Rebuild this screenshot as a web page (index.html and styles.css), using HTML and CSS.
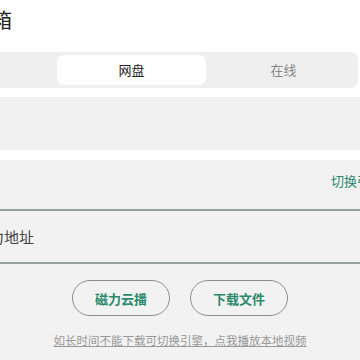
FILE: index.html
```html
<!DOCTYPE html>
<html lang="zh-CN">
<head>
  <meta charset="UTF-8">
  <meta name="viewport" content="width=device-width, initial-scale=1.0">
  <title>磁力工具箱</title>
  <link rel="stylesheet" href="styles.css">
</head>
<body>
  <div class="page">
    <h1 class="title">磁力工具箱</h1>
    <div class="tabs">
      <div class="tab">种子</div>
      <div class="tab active">网盘</div>
      <div class="tab">在线</div>
    </div>
    <div class="panel panel-top"></div>
    <div class="panel panel-main">
      <div class="engine-row">
        <span class="engine">切换引擎</span>
      </div>
      <div class="input-box">请输入磁力地址</div>
      <div class="actions">
        <button class="pill">磁力云播</button>
        <button class="pill">下载文件</button>
      </div>
      <div class="tip"><a href="#">如长时间不能下载可切换引擎，点我播放本地视频</a></div>
    </div>
  </div>
</body>
</html>
```

FILE: styles.css
```css
html, body {
  margin: 0;
  overflow: hidden;
  background: #fff;
}
body {
  font-family: "Noto Sans CJK SC", "Noto Sans", sans-serif;
  color: #222;
}
.page {
  width: 560px;
  margin-left: -100px;
}
.title {
  margin: 0;
  padding: 6px 12px;
  font-size: 20px;
  line-height: 28px;
  font-weight: normal;
  color: #222;
}
.tabs {
  display: flex;
  margin: 12px 102px 0 5px;
  padding: 3px;
  background: #efefef;
  border-radius: 8px;
}
.tab {
  flex: 1;
  height: 30px;
  line-height: 30px;
  text-align: center;
  font-size: 13px;
  color: #888;
  border-radius: 7px;
}
.tab:last-child {
  text-indent: 6px;
}
.tab.active {
  background: #fff;
  color: #222;
}
.panel {
  background: #f1f1f1;
}
.panel-top {
  margin-top: 9px;
  height: 53px;
}
.panel-main {
  margin-top: 10px;
  padding-bottom: 20px;
  background: #f2f2f2;
}
.engine-row {
  display: flex;
  justify-content: flex-end;
  padding-right: 77px;
  height: 42px;
  line-height: 42px;
}
.engine {
  font-size: 13px;
  color: #2b8a6b;
}
.input-box {
  box-sizing: border-box;
  margin: 7px 12px 0;
  height: 55px;
  padding-left: 15px;
  line-height: 51px;
  font-size: 15px;
  color: #444;
  border: 2px solid #98a09f;
}
.actions {
  display: flex;
  justify-content: center;
  gap: 20px;
  margin-top: 16px;
}
.pill {
  width: 98px;
  height: 36px;
  background: transparent;
  border: 1.5px solid #8e8e8e;
  border-radius: 18px;
  font-family: inherit;
  font-size: 13px;
  font-weight: bold;
  color: #2b8a6b;
}
.tip {
  margin-top: 14px;
  line-height: 20px;
  text-align: center;
  font-size: 11.5px;
}
.tip a {
  color: #999;
  text-decoration: underline;
}
```
